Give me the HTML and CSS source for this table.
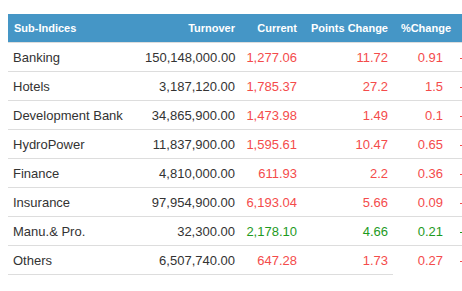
FILE: index.html
```html
<!DOCTYPE html>
<html>
<head>
<meta charset="utf-8">
<link rel="stylesheet" href="styles.css">
</head>
<body>
<div class="wrap">
<table class="idx">
  <colgroup>
    <col class="c1"><col class="c2"><col class="c3"><col class="c4"><col class="c5"><col class="c6">
  </colgroup>
  <thead>
    <tr>
      <th class="l">Sub-Indices</th>
      <th>Turnover</th>
      <th>Current</th>
      <th>Points Change</th>
      <th>%Change</th>
      <th class="l"></th>
    </tr>
  </thead>
  <tbody>
    <tr class="dn"><td class="l">Banking</td><td class="to">150,148,000.00</td><td>1,277.06</td><td>11.72</td><td class="pc">0.91</td><td class="ex"><span class="mark"></span></td></tr>
    <tr class="dn"><td class="l">Hotels</td><td class="to">3,187,120.00</td><td>1,785.37</td><td>27.2</td><td class="pc">1.5</td><td class="ex"><span class="mark"></span></td></tr>
    <tr class="dn"><td class="l">Development Bank</td><td class="to">34,865,900.00</td><td>1,473.98</td><td>1.49</td><td class="pc">0.1</td><td class="ex"><span class="mark"></span></td></tr>
    <tr class="dn"><td class="l">HydroPower</td><td class="to">11,837,900.00</td><td>1,595.61</td><td>10.47</td><td class="pc">0.65</td><td class="ex"><span class="mark"></span></td></tr>
    <tr class="dn"><td class="l">Finance</td><td class="to">4,810,000.00</td><td>611.93</td><td>2.2</td><td class="pc">0.36</td><td class="ex"><span class="mark"></span></td></tr>
    <tr class="dn"><td class="l">Insurance</td><td class="to">97,954,900.00</td><td>6,193.04</td><td>5.66</td><td class="pc">0.09</td><td class="ex"><span class="mark"></span></td></tr>
    <tr class="up"><td class="l">Manu.&amp; Pro.</td><td class="to">32,300.00</td><td>2,178.10</td><td>4.66</td><td class="pc">0.21</td><td class="ex"><span class="mark"></span></td></tr>
    <tr class="dn last"><td class="l">Others</td><td class="to">6,507,740.00</td><td>647.28</td><td>1.73</td><td class="pc">0.27</td><td class="ex"><span class="mark"></span></td></tr>
  </tbody>
</table>
</div>
</body>
</html>
```
FILE: styles.css
```css
html, body {
  margin: 0;
  padding: 0;
  background: #fff;
  overflow: hidden;
}
.wrap {
  padding: 14px 0 0 8px;
  width: 600px;
}
.idx {
  border-collapse: collapse;
  table-layout: fixed;
  width: 560px;
  font-family: "Liberation Sans", Arial, sans-serif;
  font-size: 13px;
  color: #333;
}
.c1 { width: 132px; }
.c2 { width: 100px; }
.c3 { width: 62px; }
.c4 { width: 91px; }
.c5 { width: 63px; }
.c6 { width: 112px; }
.idx th {
  background: #4596c6;
  color: #fff;
  font-size: 11px;
  font-weight: bold;
  height: 28px;
  padding: 0 5px;
  text-align: right;
  white-space: nowrap;
  border-bottom: 1px solid #ddd;
}
.idx th.l { text-align: left; padding-left: 6px; }
.idx td {
  height: 28px;
  padding: 0 5px;
  text-align: right;
  white-space: nowrap;
  border-bottom: 1px solid #ddd;
  vertical-align: middle;
}
.idx td.l { text-align: left; color: #333; }
.idx td.to { color: #333; }
.idx td.pc { padding-right: 13px; }
.idx td.ex { text-align: left; padding-left: 4px; }
.mark {
  display: inline-block;
  width: 4px;
  height: 1px;
  background: currentColor;
  vertical-align: middle;
}
.dn td { color: #f44b4b; }
.up td { color: #1e9a1e; }
.last td.pc, .last td.ex { border-bottom-color: transparent; }
```
